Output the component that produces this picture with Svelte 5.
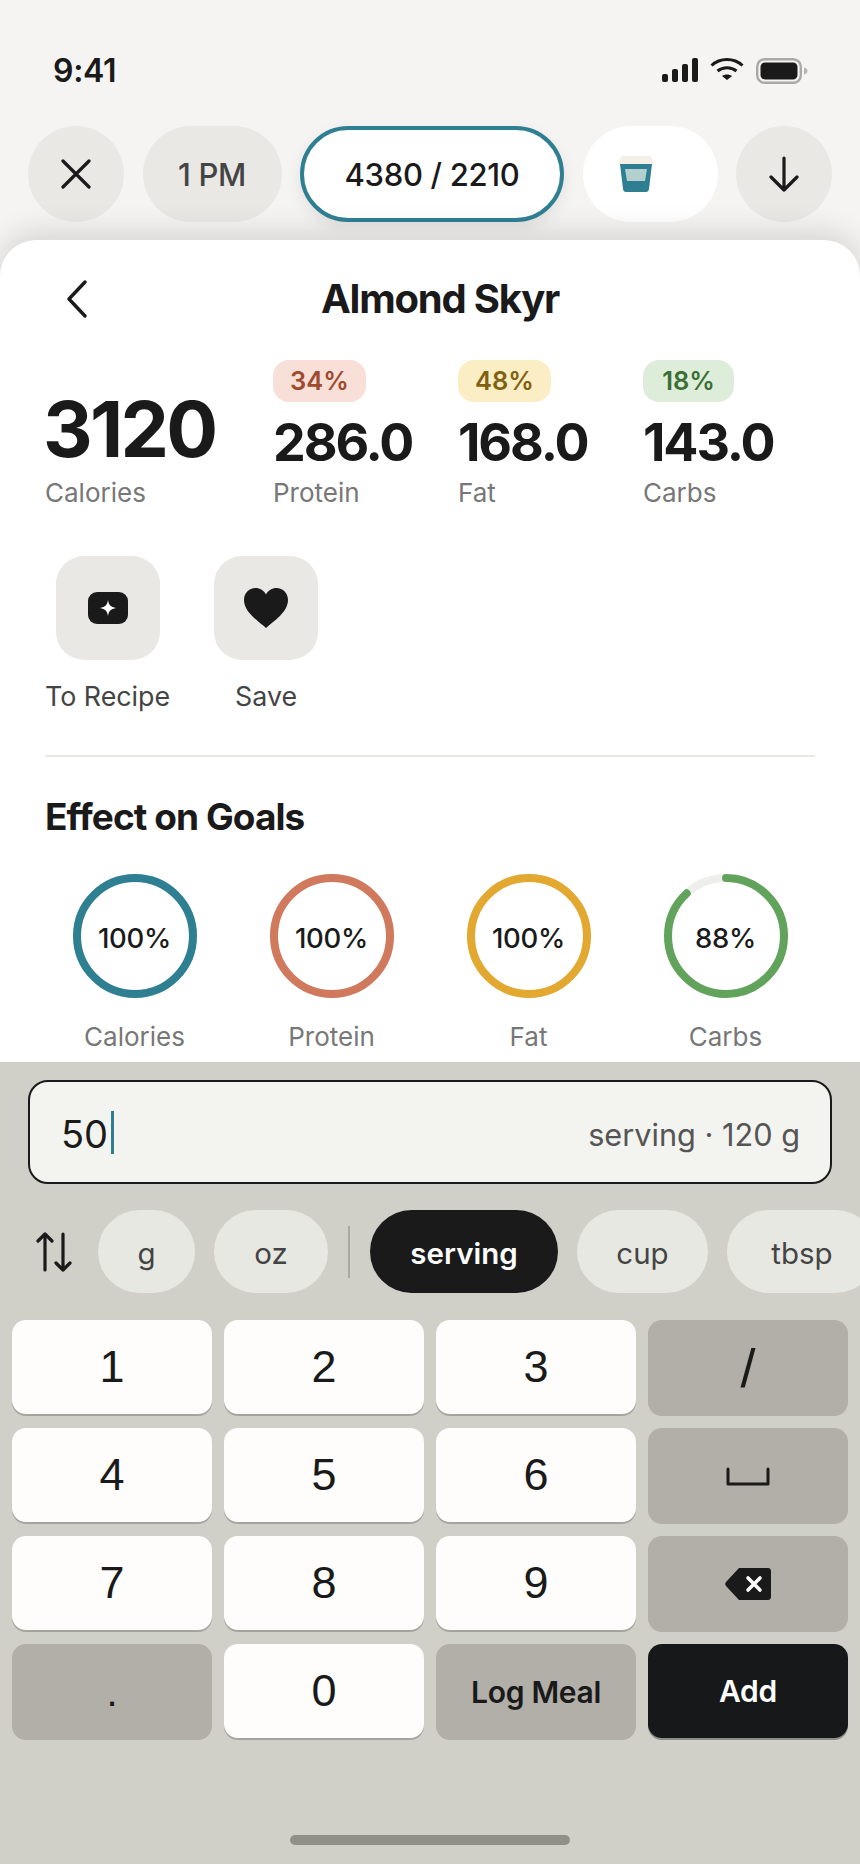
<script>
  const macros = [
    { pct: '34%', value: '286.0', label: 'Protein', tone: 'protein' },
    { pct: '48%', value: '168.0', label: 'Fat', tone: 'fat' },
    { pct: '18%', value: '143.0', label: 'Carbs', tone: 'carbs' }
  ];

  const goals = [
    { label: 'Calories', pct: 100, color: '#2f7f93' },
    { label: 'Protein', pct: 100, color: '#d0795c' },
    { label: 'Fat', pct: 100, color: '#e2a82f' },
    { label: 'Carbs', pct: 88, color: '#62a35c' }
  ];

  const radius = 58;
  const circumference = 2 * Math.PI * radius;

  const units = ['cup', 'tbsp'];

  const keys = [
    { label: '1' }, { label: '2' }, { label: '3' }, { label: '/', kind: 'dark slash' },
    { label: '4' }, { label: '5' }, { label: '6' }, { icon: 'space', kind: 'dark' },
    { label: '7' }, { label: '8' }, { label: '9' }, { icon: 'back', kind: 'dark' },
    { label: '.', kind: 'dark dot' }, { label: '0' }, { label: 'Log Meal', kind: 'dark text' }, { label: 'Add', kind: 'black text' }
  ];
</script>

<div class="phone">
  <div class="status">
    <span class="time">9:41</span>
    <div class="status-icons">
      <svg width="36" height="24" viewBox="0 0 36 24" fill="#1a1a1a">
        <rect x="0" y="16" width="6" height="8" rx="2" />
        <rect x="10" y="11" width="6" height="13" rx="2" />
        <rect x="20" y="6" width="6" height="18" rx="2" />
        <rect x="30" y="0" width="6" height="24" rx="2" />
      </svg>
      <svg width="34" height="22" viewBox="0 0 34 22" fill="none" stroke="#1a1a1a" stroke-width="3">
        <path d="M1.5 7.5C10 -0.5 24 -0.5 32.5 7.5" />
        <path d="M7.5 13C13 8.5 21 8.5 26.5 13" />
        <path d="M12 18L17 22L22 18C19 16 15 16 12 18Z" fill="#1a1a1a" stroke="none" />
      </svg>
      <svg width="52" height="26" viewBox="0 0 52 26">
        <rect x="1.2" y="1.2" width="43.6" height="23.6" rx="7.5" fill="none" stroke="#a9a9a9" stroke-width="2.4" />
        <rect x="4.5" y="4.5" width="37" height="17" rx="4.5" fill="#1a1a1a" />
        <path d="M48 9.5C50.5 10 51.5 11.5 51.5 13C51.5 14.5 50.5 16 48 16.5Z" fill="#b5b5b5" />
      </svg>
    </div>
  </div>

  <div class="chips">
    <button class="chip round">
      <svg width="30" height="30" viewBox="0 0 30 30" fill="none" stroke="#1a1a1a" stroke-width="3.2" stroke-linecap="round">
        <path d="M2 2L28 28M28 2L2 28" />
      </svg>
    </button>
    <button class="chip time-chip">1 PM</button>
    <button class="chip total">4380 / 2210</button>
    <button class="chip drink">
      <svg width="36" height="36" viewBox="0 0 36 36">
        <path d="M2 8H34L31 33C30.800 35 29.500 36 28 36H8C6.500 36 5.200 35 5 33Z" fill="#2f7f93" />
        <path d="M7 13H29L27 25H9Z" fill="#b3cfce" />
        <path d="M3 0H33L36 8H0Z" fill="#f3f1e7" />
      </svg>
    </button>
    <button class="chip round">
      <svg width="30" height="36" viewBox="0 0 30 36" fill="none" stroke="#1a1a1a" stroke-width="3.2" stroke-linecap="round" stroke-linejoin="round">
        <path d="M15 2V34M2 21L15 34L28 21" />
      </svg>
    </button>
  </div>

  <div class="sheet">
    <div class="title-row">
      <svg class="back" width="22" height="38" viewBox="0 0 22 38" fill="none" stroke="#1a1a1a" stroke-width="3.4" stroke-linecap="round" stroke-linejoin="round">
        <path d="M19 2L3 19L19 36" />
      </svg>
      <h1>Almond Skyr</h1>
    </div>

    <div class="stats">
      <div class="stat main">
        <div class="big">3120</div>
        <div class="caption">Calories</div>
      </div>
      {#each macros as macro}
        <div class="stat">
          <span class="badge {macro.tone}">{macro.pct}</span>
          <div class="num">{macro.value}</div>
          <div class="caption">{macro.label}</div>
        </div>
      {/each}
    </div>

    <div class="actions">
      <div class="action">
        <div class="tile">
          <svg width="40" height="32" viewBox="0 0 40 32">
            <rect width="40" height="32" rx="9" fill="#1a1a1a" />
            <path d="M20 8C20.800 13 22.500 15 28 16C22.500 17 20.800 19 20 24C19.200 19 17.500 17 12 16C17.500 15 19.200 13 20 8Z" fill="#fff" />
          </svg>
        </div>
        <span>To Recipe</span>
      </div>
      <div class="action">
        <div class="tile">
          <svg width="44" height="40" viewBox="0 0 44 40">
            <path d="M22 40C14 33 0 24 0 12C0 5 5 0 11.500 0C16 0 20 2.500 22 6.500C24 2.500 28 0 32.500 0C39 0 44 5 44 12C44 24 30 33 22 40Z" fill="#1a1a1a" />
          </svg>
        </div>
        <span>Save</span>
      </div>
    </div>

    <hr />

    <h2>Effect on Goals</h2>

    <div class="goals">
      {#each goals as goal}
        <div class="goal">
          <div class="ring">
            <svg width="124" height="124" viewBox="0 0 124 124" fill="none">
              <circle cx="62" cy="62" r={radius} stroke="#eeeeec" stroke-width="8" />
              <circle
                cx="62"
                cy="62"
                r={radius}
                stroke={goal.color}
                stroke-width="8"
                stroke-linecap="round"
                stroke-dasharray="{(goal.pct / 100) * circumference} {circumference}"
                transform="rotate(-90 62 62)"
              />
            </svg>
            <span>{goal.pct}%</span>
          </div>
          <div class="caption">{goal.label}</div>
        </div>
      {/each}
    </div>
  </div>

  <div class="panel">
    <div class="input">
      <span class="amount">50</span>
      <span class="caret"></span>
      <span class="hint">serving · 120 g</span>
    </div>

    <div class="units">
      <svg class="swap" width="36" height="40" viewBox="0 0 36 40" fill="none" stroke="#1a1a1a" stroke-width="3.2" stroke-linecap="round" stroke-linejoin="round">
        <path d="M9 38V2M2 9L9 2L16 9" />
        <path d="M27 2V38M20 31L27 38L34 31" />
      </svg>
      <button class="unit g">g</button>
      <button class="unit oz">oz</button>
      <span class="sep"></span>
      <button class="unit serving">serving</button>
      {#each units as unit}
        <button class="unit {unit}">{unit}</button>
      {/each}
    </div>

    <div class="keys">
      {#each keys as key}
        <button class="key {key.kind ?? ''}">
          {#if key.icon === 'space'}
            <svg width="44" height="19" viewBox="0 0 44 19" fill="none" stroke="#1a1a1a" stroke-width="3" stroke-linecap="round" stroke-linejoin="round">
              <path d="M2 2V17H42V2" />
            </svg>
          {:else if key.icon === 'back'}
            <svg width="46" height="32" viewBox="0 0 46 32">
              <path d="M14 0H43C44.700 0 46 1.300 46 3V29C46 30.700 44.700 32 43 32H14L1 18C0 17 0 15 1 14Z" fill="#1a1a1a" />
              <path d="M23 10L35 22M35 10L23 22" stroke="#fff" stroke-width="3.6" stroke-linecap="round" />
            </svg>
          {:else}
            {key.label}
          {/if}
        </button>
      {/each}
    </div>

    <div class="home"></div>
  </div>
</div>

<style>
  :global(body) {
    margin: 0;
    background: #f5f4f2;
  }

  .phone {
    width: 860px;
    height: 1864px;
    display: flex;
    flex-direction: column;
    overflow: hidden;
    background: #f5f4f2;
    font-family: Inter, "Noto Sans", sans-serif;
    color: #1a1a1a;
  }

  button {
    font-family: inherit;
    border: none;
    color: inherit;
    padding: 0;
  }

  .status {
    height: 126px;
    flex: none;
    display: flex;
    justify-content: space-between;
    align-items: flex-start;
    box-sizing: border-box;
    padding: 52px 52px 0 53px;
  }

  .time {
    font-size: 32px;
    font-weight: 600;
    line-height: 38px;
    letter-spacing: -0.01em;
  }

  .status-icons {
    display: flex;
    align-items: flex-start;
    gap: 12px;
    padding-top: 6px;
  }

  .chips {
    flex: none;
    display: flex;
    gap: 18.5px;
    padding: 0 28px;
    height: 96px;
  }

  .chip {
    height: 96px;
    border-radius: 48px;
    background: #e9e8e5;
    font-size: 31px;
    font-weight: 500;
    letter-spacing: -0.01em;
    display: flex;
    align-items: center;
    justify-content: center;
    box-sizing: border-box;
    flex: none;
  }

  .round {
    width: 96px;
  }

  .time-chip {
    width: 139px;
    color: #444;
  }

  .total {
    width: 264px;
    background: #fff;
    border: 4px solid #2f7f93;
    box-shadow: 0 6px 16px rgba(0, 0, 0, 0.08);
  }

  .drink {
    width: 135px;
    background: #fff;
    justify-content: flex-start;
    padding-left: 35px;
  }

  .sheet {
    flex: none;
    height: 822px;
    margin-top: 18px;
    box-sizing: border-box;
    background: #fff;
    border-radius: 36px 36px 0 0;
    box-shadow: 0 -8px 30px rgba(0, 0, 0, 0.13);
    padding: 0 45px;
  }

  .title-row {
    position: relative;
    height: 116px;
    display: flex;
    justify-content: center;
    align-items: flex-start;
  }

  .back {
    position: absolute;
    left: 21px;
    top: 40px;
  }

  h1 {
    margin: 36px 0 0 20px;
    font-size: 40px;
    line-height: 46px;
    font-weight: 700;
    letter-spacing: -0.03em;
  }

  .stats {
    display: flex;
    align-items: flex-end;
    height: 160px;
    margin-top: -6px;
  }

  .stat {
    width: 185px;
    flex: none;
  }

  .main {
    width: 228px;
  }

  .big {
    font-size: 77px;
    font-weight: 700;
    line-height: 84px;
    letter-spacing: -0.035em;
    margin: 0 0 5px -2px;
  }

  .num {
    font-size: 52px;
    font-weight: 700;
    line-height: 60px;
    letter-spacing: -0.04em;
    margin: 11px 0 3px;
  }

  .caption {
    font-size: 26px;
    line-height: 34px;
    color: #777;
  }

  .badge {
    display: inline-block;
    width: 93px;
    box-sizing: border-box;
    text-align: center;
    height: 42px;
    line-height: 42px;
    border-radius: 16px;
    font-size: 25.500px;
    font-weight: 600;
  }

  .protein {
    background: #f8dfd8;
    color: #a04a30;
  }

  .fat {
    background: #fbeec5;
    color: #80610f;
  }

  .carbs {
    width: 91px;
    background: #deedd9;
    color: #3b6e35;
  }

  .actions {
    display: flex;
    gap: 44px;
    margin-top: 46px;
  }

  .action {
    display: flex;
    flex-direction: column;
    align-items: center;
    gap: 19px;
    font-size: 26.800px;
    line-height: 34px;
    color: #444;
  }

  .tile {
    width: 104px;
    height: 104px;
    border-radius: 28px;
    background: #e9e8e5;
    display: flex;
    align-items: center;
    justify-content: center;
  }

  hr {
    margin: 42px 0 0;
    border: none;
    border-top: 2px solid #e9e9e6;
  }

  h2 {
    margin: 38px 0 0;
    font-size: 37px;
    line-height: 44px;
    font-weight: 700;
    letter-spacing: -0.025em;
  }

  .goals {
    display: grid;
    grid-template-columns: repeat(4, 197px);
    margin: 35px 0 0 -9px;
  }

  .goal {
    display: flex;
    flex-direction: column;
    align-items: center;
    gap: 22px;
  }

  .ring {
    position: relative;
    width: 124px;
    height: 124px;
    display: block;
  }

  .ring svg {
    display: block;
  }

  .ring span {
    position: absolute;
    inset: 3px 0 0;
    display: flex;
    align-items: center;
    justify-content: center;
    font-size: 27.500px;
    font-weight: 500;
    letter-spacing: -0.01em;
  }

  .panel {
    flex: 1;
    background: #d0d0c9;
    padding-top: 18px;
    display: flex;
    flex-direction: column;
    min-height: 0;
  }

  .input {
    margin: 0 28px;
    height: 104px;
    box-sizing: border-box;
    border: 2px solid #1a1a1a;
    border-radius: 20px;
    background: #f3f3ef;
    display: flex;
    align-items: center;
    padding: 0 30px 0 31px;
  }

  .amount {
    font-size: 38px;
    margin-top: 3px;
  }

  .caret {
    width: 3px;
    height: 43px;
    margin-left: 3px;
    background: #2f7f93;
  }

  .hint {
    margin-left: auto;
    font-size: 30.700px;
    margin-top: 4px;
    color: #555;
  }

  .units {
    display: flex;
    align-items: center;
    margin-top: 26px;
    height: 83px;
    padding-left: 36px;
    gap: 19px;
    white-space: nowrap;
  }

  .swap {
    flex: none;
    margin-right: 7px;
  }

  .unit {
    flex: none;
    height: 83px;
    border-radius: 42px;
    background: #e8e8e2;
    font-size: 29.500px;
    font-weight: 400;
    color: #444;
    padding-top: 2px;
  }

  .g {
    width: 97px;
  }

  .oz {
    width: 114px;
  }

  .sep {
    flex: none;
    width: 2px;
    height: 52px;
    background: #a9a9a2;
    margin: 0 1px;
  }

  .serving {
    width: 188px;
    background: #1a1a1a;
    color: #fff;
    font-weight: 600;
  }

  .cup {
    width: 131px;
  }

  .tbsp {
    width: 150px;
  }

  .keys {
    display: grid;
    grid-template-columns: repeat(4, 200px);
    grid-auto-rows: 96px;
    gap: 12px;
    padding: 0 12px;
    margin-top: 27px;
  }

  .key {
    border-radius: 14px;
    background: #fefdfb;
    box-shadow: 0 2px 0 #a5a59f;
    height: 94px;
    font-family: "Liberation Sans", Arial, sans-serif;
    font-size: 45px;
    display: flex;
    align-items: center;
    justify-content: center;
  }

  .dark {
    background: #b1afa7;
    box-shadow: none;
    height: 96px;
  }

  .slash {
    font-size: 54px;
  }

  .dot {
    font-size: 40px;
  }

  .black {
    background: #17181a;
    color: #fff;
    box-shadow: 0 2px 0 #8c8c86;
  }

  .text {
    font-family: Inter, "Noto Sans", sans-serif;
    font-size: 30px;
    font-weight: 600;
    letter-spacing: -0.01em;
  }

  .home {
    align-self: center;
    width: 280px;
    height: 10px;
    border-radius: 5px;
    background: #90908a;
    margin-top: auto;
    margin-bottom: 19px;
  }
</style>
